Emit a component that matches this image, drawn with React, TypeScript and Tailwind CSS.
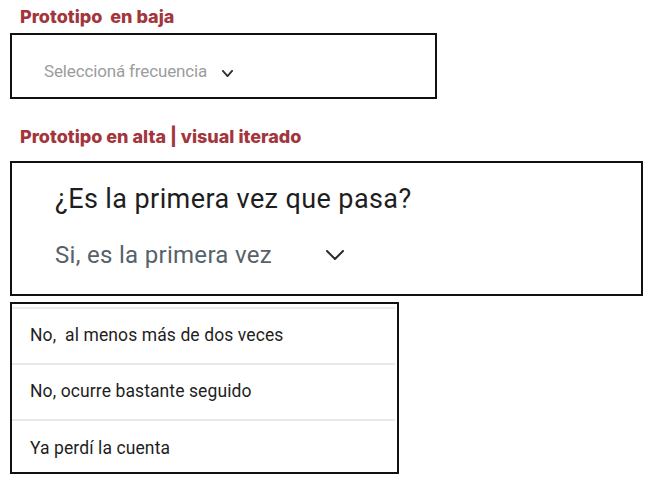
const options = [
  "No,  al menos más de dos veces",
  "No, ocurre bastante seguido",
  "Ya perdí la cuenta",
];

function Chevron({ w, h, stroke }: { w: number; h: number; stroke: number }) {
  return (
    <svg width={w} height={h} viewBox={`0 0 ${w} ${h}`} fill="none" className="shrink-0">
      <polyline
        points={`${stroke / 2},${stroke / 2} ${w / 2},${h - stroke / 2} ${w - stroke / 2},${stroke / 2}`}
        stroke="#2b2b2b"
        strokeWidth={stroke}
        strokeLinecap="round"
        strokeLinejoin="round"
      />
    </svg>
  );
}

export default function App() {
  return (
    <div className="w-[654px] h-[484px] bg-white overflow-hidden font-['Roboto',sans-serif]">
      {/* Prototipo en baja */}
      <h2 className="pl-[20px] pt-[5px] h-[33px] text-[18px] leading-[24px] font-extrabold text-[#a3363c] font-['Inter',sans-serif] whitespace-pre">
        Prototipo  en baja
      </h2>
      <div className="ml-[10px] w-[427px] h-[66px] border-2 border-[#111] flex items-center pl-[32px] pt-[12px]">
        <span className="text-[17px] text-[#9c9c9c] tracking-[-0.15px]">Seleccioná frecuencia</span>
        <div className="ml-[15px] mt-[2px]">
          <Chevron w={11} h={7} stroke={1.8} />
        </div>
      </div>

      {/* Prototipo en alta */}
      <h2 className="pl-[20px] pt-[26px] h-[62px] text-[18px] leading-[24px] font-extrabold text-[#a3363c] font-['Inter',sans-serif]">
        Prototipo en alta | visual iterado
      </h2>
      <div className="ml-[10px] w-[633px] h-[135px] border-2 border-[#111] pl-[43px] pt-[20px]">
        <p className="text-[27px] leading-[32px] tracking-[0.4px] text-[#1e1e1e]">¿Es la primera vez que pasa?</p>
        <div className="flex items-center mt-[25px]">
          <span className="text-[24px] leading-[30px] tracking-[0.3px] text-[#56616a] w-[271px]">Si, es la primera vez</span>
          <Chevron w={18} h={10} stroke={2} />
        </div>
      </div>

      {/* Opciones */}
      <div className="ml-[10px] mt-[6px] w-[389px] h-[172px] border-2 border-[#111] pt-[3px] pr-[2px]">
        <ul className="border-t-2 border-[#ededed]">
          {options.map((o, i) => (
            <li
              key={o}
              className={`h-[56px] flex items-center pl-[18px] pb-[2px] text-[17.5px] tracking-[0.1px] text-[#1e1e1e] whitespace-pre ${
                i < options.length - 1 ? "border-b-2 border-[#e9e9e9]" : ""
              }`}
            >
              {o}
            </li>
          ))}
        </ul>
      </div>
    </div>
  );
}
